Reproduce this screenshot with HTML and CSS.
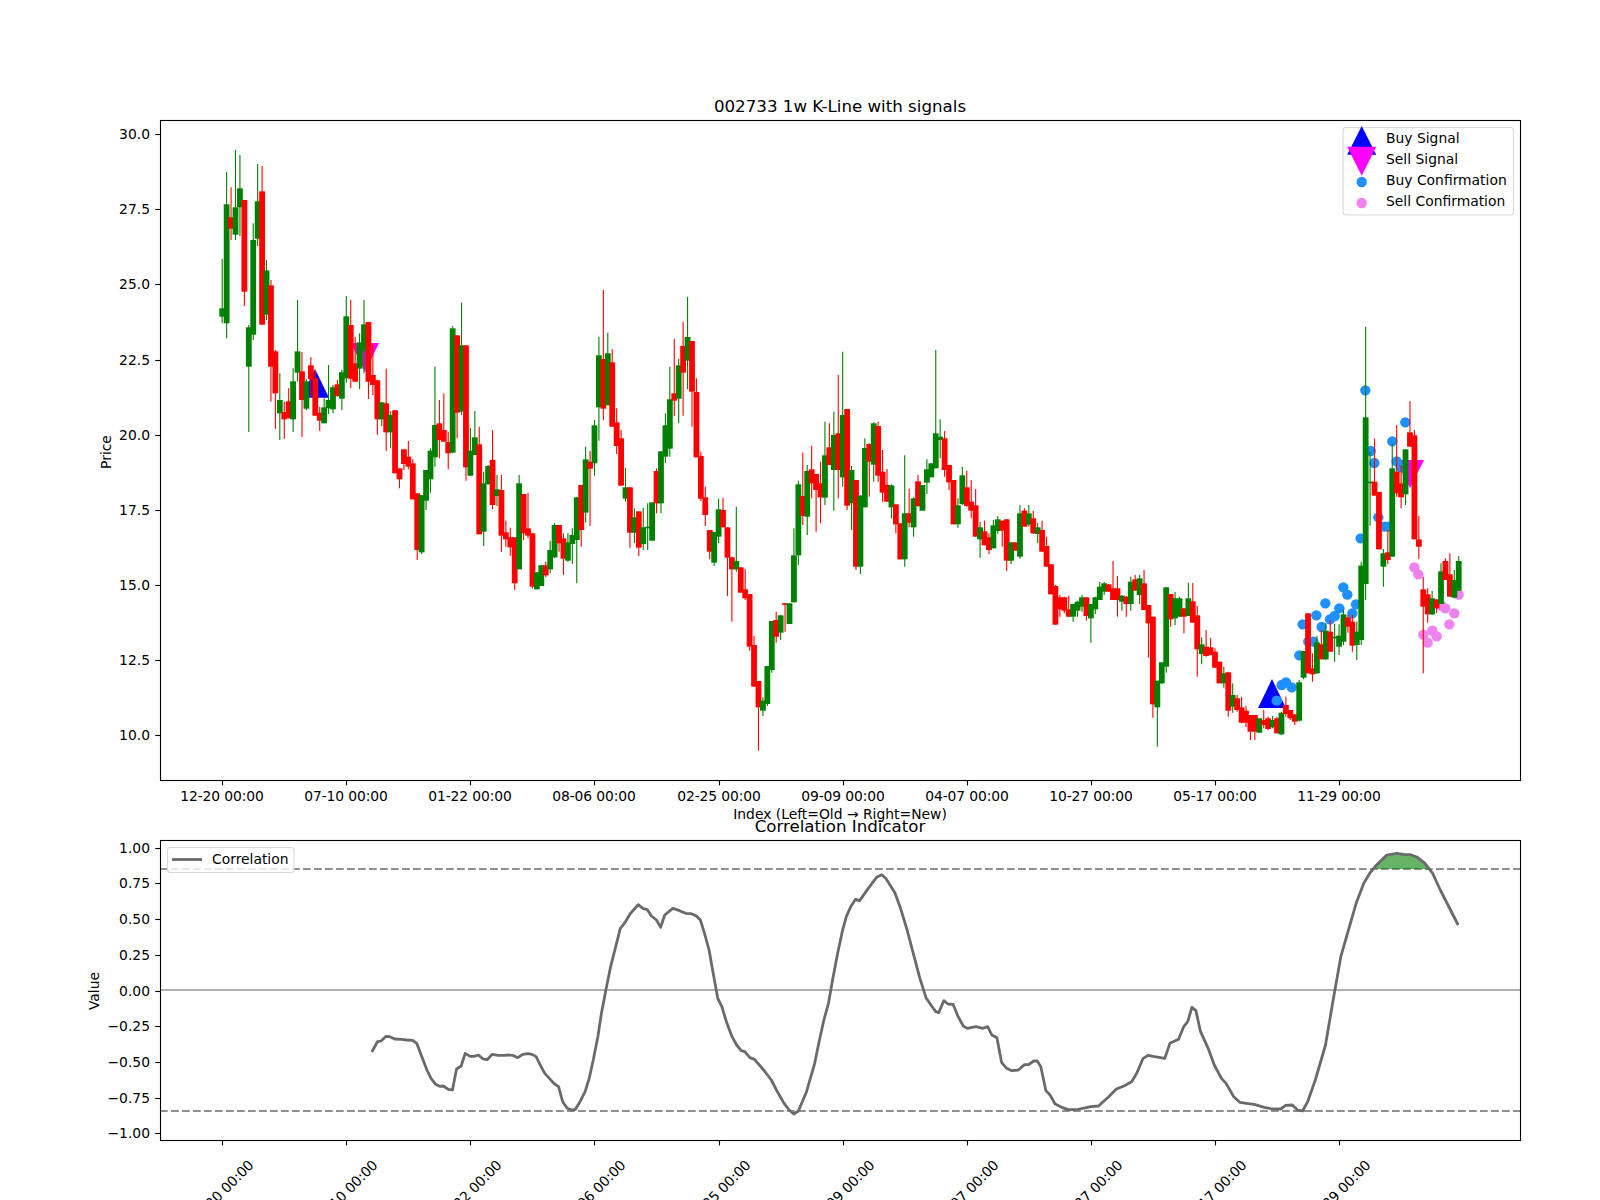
FILE: index.html
```html
<!DOCTYPE html>
<html lang="en">
<head>
  <meta charset="UTF-8" />
  <title>002733 1w K-Line with signals</title>
  <link rel="stylesheet" href="styles.css">
</head>
<body>
  <svg id="figure" class="figure" xmlns="http://www.w3.org/2000/svg" width="1600" height="1200" viewBox="0 0 1600 1200">
    <!-- price panel -->
    <text class="title" x="840" y="112">002733 1w K-Line with signals</text>
    <g id="signals">
      <polygon class="buy-signal" points="315,369 301,397.7 329,397.7" />
      <polygon class="buy-signal" points="1272,679 1258,708 1286,708" />
      <polygon class="sell-signal" points="351,343 379,343 365,372" />
      <polygon class="sell-signal" points="1396,460 1424,460 1410,488" />
    </g>
    <g id="confirmations"></g>
    <g id="candles"></g>
    <rect class="spine" x="160.5" y="120.5" width="1360" height="660" />
    <g id="price-ticks"></g>
    <text class="label" x="840" y="819">Index (Left=Old → Right=New)</text>
    <text class="label" transform="rotate(-90 111 452)" x="111" y="452">Price</text>

    <g class="legend">
      <rect class="legend-box" x="1343" y="127.5" width="170.5" height="87.5" rx="3" />
      <polygon class="buy-signal" points="1361.7,126 1347.2,154.7 1376.2,154.7" />
      <polygon class="sell-signal" points="1347.2,146.7 1376.2,146.7 1361.7,175.7" />
      <circle class="buy-dot" cx="1361.7" cy="182" r="5.2" />
      <circle class="sell-dot" cx="1361.7" cy="203" r="5.2" />
      <text class="legend-text" x="1386" y="143">Buy Signal</text>
      <text class="legend-text" x="1386" y="164">Sell Signal</text>
      <text class="legend-text" x="1386" y="185">Buy Confirmation</text>
      <text class="legend-text" x="1386" y="206">Sell Confirmation</text>
    </g>

    <!-- correlation panel -->
    <text class="title" x="840" y="832">Correlation Indicator</text>
    <line class="zero-line" x1="160" y1="990" x2="1520" y2="990" />
    <line class="level-line" x1="160" y1="869" x2="1520" y2="869" />
    <line class="level-line" x1="160" y1="1111" x2="1520" y2="1111" />
    <path id="corr-fill" class="corr-fill" />
    <polyline id="corr-line" class="corr-line" />
    <rect class="spine" x="160.5" y="840.5" width="1360" height="300" />
    <g id="corr-ticks"></g>
    <text class="label" transform="rotate(-90 99 991)" x="99" y="991">Value</text>

    <g class="legend">
      <rect class="legend-box" x="167.5" y="847.5" width="126.5" height="25" rx="3" />
      <line class="corr-line" x1="172" y1="859.5" x2="202" y2="859.5" />
      <text class="legend-text" x="212" y="864">Correlation</text>
    </g>
  </svg>

  <script src="chart.js"></script>
</body>
</html>
```

FILE: styles.css
```css
html, body {
  margin: 0;
  padding: 0;
  background: #fff;
  overflow: hidden;
}

.figure {
  display: block;
  font-family: "DejaVu Sans", sans-serif;
  font-size: 13.89px;
  fill: #000;
}

.title {
  font-size: 16.67px;
  text-anchor: middle;
}

.label,
.tick-x,
.tick-x-rot {
  text-anchor: middle;
}

.tick-x,
.tick-x-rot {
  letter-spacing: -0.12px;
}

.tick-y {
  text-anchor: end;
}

.spine {
  fill: none;
  stroke: #000;
  stroke-width: 1.1;
}

.tick-mark {
  stroke: #000;
  stroke-width: 1.1;
}

/* candles */
.wick-r { stroke: #f00; stroke-width: 1.1; }
.wick-g { stroke: #008000; stroke-width: 1.1; }
.body-r { fill: #f00; }
.body-g { fill: #008000; }

/* signals */
.buy-signal { fill: #00f; }
.sell-signal { fill: #f0f; }
.buy-dot { fill: #1e90ff; }
.sell-dot { fill: #ee82ee; }

.legend-box {
  fill: #fff;
  fill-opacity: 0.8;
  stroke: #d9d9d9;
  stroke-width: 1.1;
}

/* correlation */
.zero-line {
  stroke: #b0b0b0;
  stroke-width: 2;
}

.level-line {
  stroke: #909090;
  stroke-width: 2;
  stroke-dasharray: 7.7 3.3;
}

.corr-line {
  fill: none;
  stroke: #6a6a6a;
  stroke-width: 2.78;
  stroke-linejoin: round;
}

.corr-fill {
  fill: #008000;
  fill-opacity: 0.6;
}
```

FILE: chart.js
```js
const SVG_NS = 'http://www.w3.org/2000/svg';

// bar i sits at this x, ticks every 28 bars
const barX = i => 222.2 + 4.432 * i;
const TICK_STEP = 28 * 4.432;

function add(parent, name, attrs, text) {
  const el = document.createElementNS(SVG_NS, name);
  for (const key in attrs) el.setAttribute(key, attrs[key]);
  if (text) el.textContent = text;
  parent.appendChild(el);
  return el;
}

// candles: colour, wick top, body top, body bottom, wick bottom
// values were read off 3x crops, so y = top + value / 3
const SECTIONS = [
  { start: 0, top: 110, rows: `
g 447 595 620 640|g 186 283 640 685|r 232 322 356 390|g 120 292 374 390|g 135 235 292 378
r 270 270 545 588|g 645 652 770 966|g 340 390 674 690|g 162 274 386 408|r 168 244 644 644
g 450 481 614 630|r 510 526 770 875|r 720 724 850 957|g 790 870 910 990|r 875 906 928 987
r 835 874 925 925|g 775 814 928 966|g 570 724 788 815|r 726 784 870 981|g 808 814 896 900
r 741 766 808 860|r 780 805 917 917|r 890 908 932 963|g 865 892 940 940|g 765 870 895 912
g 825 832 898 910|r 810 823 858 860|g 780 787 866 900|g 558 619 805 818|r 570 645 806 835
r 680 760 815 815|g 670 697 776 837|g 570 643 722 790|r 636 636 815 867|r 700 795 825 855
r 810 811 928 975|g 875 877 928 948|r 776 880 967 1023|g 904 915 967 1015|r 900 901 1090 1090
r 1075 1075 1108 1135|r 1018 1018 1062 1080|r 993 1040 1070 1078|r 1048 1060 1168 1168|r 1150 1150 1320 1350
g 1155 1155 1327 1332|g 1080 1080 1172 1200|g 1015 1022 1108 1148|g 770 945 1042 1070|r 870 940 990 1045
r 850 960 995 995|r 965 996 1030 1078|g 648 655 1028 1030|r 676 676 908 985|g 578 706 905 915
r 706 706 1072 1112|g 953 1022 1097 1098|g 903 982 1035 1035|r 950 1003 1273 1273|g 1085 1120 1265 1308
g 1065 1068 1122 1125|r 960 1050 1185 1198|g 1095 1138 1158 1188|r 1095 1140 1277 1325|r 1232 1267 1288 1310
r 1253 1282 1312 1337|r 1282 1282 1420 1440|g 1095 1120 1378 1378|r 1152 1152 1270 1290|r 1148 1255 1277 1285
r 1270 1270 1430 1435|g 1387 1387 1438 1438|g 1366 1366 1428 1428|r 1355 1366 1396 1402|g 1292 1320 1378 1390` },
  { start: 75, top: 270, rows: `
g 760 765 862 865|r 765 765 820 845|r 790 805 866 915|g 790 817 872 875|g 775 795 822 882
g 680 682 810 940|r 645 645 780 830|g 530 568 728 758|r 543 575 596 768|g 450 466 580 617
g 200 256 412 512|r 60 267 416 450|g 188 250 406 406|r 237 277 470 470|r 415 457 528 552
r 480 505 647 647|g 594 652 686 695|r 652 652 788 833|g 715 742 788 820|r 725 724 833 858
g 713 772 822 840|g 700 770 775 840|g 697 697 812 812|r 595 603 700 730|g 545 544 700 730
g 430 466 560 578|g 290 388 536 560|r 207 370 392 438|g 267 286 386 460|r 155 228 308 437
g 80 201 272 358|r 213 213 365 470|r 325 366 562 562|r 545 558 686 693|r 650 682 735 768
r 780 780 845 868|g 785 786 878 888|g 687 718 800 820|r 684 720 772 772|r 772 772 863 978
r 860 862 898 1055|g 710 873 898 905|r 892 892 968 968|r 897 958 985 990|r 972 972 1130 1142
r 1098 1125 1250 1250|r 1233 1233 1312 1442|g 1282 1292 1322 1338|g 1188 1188 1302 1308|g 1053 1053 1200 1208
r 1025 1050 1100 1118|g 1036 1036 1088 1110|r 1000 1000 1005 1085|g 1000 1000 1062 1062|g 775 856 997 997
g 632 643 856 885|r 548 678 738 765|g 585 603 740 795|r 527 598 640 685|r 612 612 660 785
r 575 640 682 760|g 455 556 683 705|r 460 532 585 585|g 425 495 600 722|r 315 490 600 685
g 245 435 622 650|r 417 417 707 720|g 587 600 700 780|r 630 630 890 900|g 675 677 890 912
g 505 534 712 712|r 520 522 575 680|g 457 460 584 635|r 455 468 617 635|r 540 605 668 695
r 597 645 695 695|g 643 646 712 745|r 703 703 763 790|r 760 760 868 868|g 556 730 868 890
r 656 730 758 772|g 682 685 772 800|r 615 634 708 710|g 645 645 722 722|g 568 598 638 672
g 580 580 622 622|g 240 490 595 595|g 448 500 510 565|r 483 505 600 620|r 585 585 637 660` },
  { start: 165, top: 400, rows: `
r 240 240 373 373|g 295 316 373 383|g 200 226 312 315|r 212 262 318 320|r 240 305 332 355
r 267 316 410 410|g 365 382 418 473|r 362 394 436 436|r 400 412 450 462|g 360 376 445 445
g 348 358 393 402|r 362 362 392 440|r 358 358 482 513|g 427 427 482 492|r 427 427 452 452
g 315 340 470 476|r 325 332 380 380|g 315 340 374 380|r 333 355 400 402|g 368 382 402 430
r 362 390 455 455|r 410 438 500 500|r 493 493 583 583|r 555 558 674 674|r 585 592 628 650
r 590 592 632 640|r 587 628 650 650|g 612 612 650 665|g 602 605 632 650|g 585 592 620 635
r 592 592 648 662|g 612 612 655 728|g 590 592 628 642|g 546 560 600 600|g 546 550 575 585
r 553 553 575 575|r 483 565 600 600|r 528 565 600 650|g 585 587 605 632|r 588 590 612 650
g 530 545 612 632|r 525 538 572 572|g 524 535 585 612|r 510 550 630 630|r 615 615 670 773
r 650 650 913 953|g 842 842 922 1040|g 787 787 850 852|g 562 562 800 818|r 582 582 658 680
g 576 595 655 675|g 590 595 650 650|r 625 625 650 700|g 548 595 648 648|r 549 604 668 668
r 618 646 748 830|g 712 733 762 792|r 690 740 768 770|r 714 742 765 765|r 745 755 803 803
r 785 785 850 850|g 800 820 850 863|r 815 817 932 950|g 850 885 920 938|r 885 895 930 935
r 890 922 968 970|r 917 932 968 982|r 945 945 995 1020|r 945 945 995 1020|g 955 955 998 998
r 930 960 975 985|r 950 955 987 990|g 948 960 982 985|r 950 955 1000 1000|g 935 938 1003 1005
r 890 915 942 950` },
  { start: 241, top: 380, rows: `
r 990 990 1015 1020|r 1003 1003 1025 1035|g 900 907 1022 1025|g 813 813 893 898|r 700 700 880 880
r 820 865 883 905|g 767 787 880 882|r 750 793 838 838|g 730 752 838 840|r 720 755 815 815
g 732 770 775 845|g 733 767 800 825|g 688 703 785 795|r 705 712 740 758|r 705 725 797 815
g 725 755 795 840|g 545 557 780 795|g -159 112 612 660|g 215 305 310 437|r 175 305 347 347
r 336 336 508 508|g 507 520 560 620|r 450 517 540 552|g 190 265 530 530|r 135 275 340 350
r 255 310 352 385|g 208 208 343 375|r 63 157 200 200|r 150 166 478 478|r 408 478 500 537
r 590 628 680 880|r 625 643 703 728|g 633 655 703 705|r 658 658 685 700|g 550 574 672 672
r 535 543 600 600|r 520 583 650 650|g 570 600 653 655|g 528 543 632 632` }
];

const candles = document.getElementById('candles');
const BODY_W = 5.8;

SECTIONS.forEach(section => {
  const rows = section.rows.trim().split(/[|\n]/);
  rows.forEach((row, n) => {
    const [c, wt, bt, bb, wb] = row.split(' ');
    const x = barX(section.start + n);
    const y = v => section.top + v / 3;
    add(candles, 'line', { class: 'wick-' + c, x1: x, x2: x, y1: y(+wt), y2: y(+wb) });
    add(candles, 'rect', {
      class: 'body-' + c,
      x: x - BODY_W / 2,
      y: y(+bt),
      width: BODY_W,
      height: (bb - bt) / 3
    });
  });
});

// confirmation dots, also read off a 3x crop at (1230, 380)
const BUY_DOTS = [[406,31],[422,213],[433,249],[487,184],[526,127],[500,244],[512,262],[445,412],[463,440],[476,440],
  [392,475],[340,622],[352,644],[286,670],[378,673],[328,685],[367,700],[314,708],[300,718],[259,706],[218,733],
  [275,741],[235,785],[250,785],[208,826],[155,915],[168,907],[185,922],[140,962]];
const SELL_DOTS = [[553,562],[565,583],[580,764],[593,788],[607,752],[620,769],[646,685],[634,677],[673,700],[658,733],[686,644]];

const dots = document.getElementById('confirmations');
function addDots(list, cls) {
  list.forEach(([zx, zy]) => {
    add(dots, 'circle', { class: cls, cx: 1230 + zx / 3, cy: 380 + zy / 3, r: 5.2 });
  });
}
addDots(BUY_DOTS, 'buy-dot');
addDots(SELL_DOTS, 'sell-dot');

// correlation line
const CORR_LEFT = [[572,846],[583,815],[590,813],[600,799],[607,800],[617,807],[630,808],[640,810],[652,811],[660,820],
  [670,860],[680,900],[688,925],[697,943],[705,949],[712,948],[722,958],[730,960],[738,897],[747,888],[755,850],[765,859],
  [772,859],[781,855],[790,867],[798,869],[808,853],[820,856],[830,856],[842,855],[850,857],[858,863],[868,853],[878,851],
  [886,853],[894,860],[902,885],[911,910],[920,925],[930,942],[938,950],[946,995],[955,1015],[963,1020],[971,1018],[980,995],
  [990,965],[998,925],[1006,870],[1015,800],[1022,730],[1032,650],[1040,590],[1050,530],[1059,475],[1068,458],[1078,432],
  [1094,404],[1104,416],[1112,419],[1120,438],[1130,450],[1138,472],[1146,435],[1162,415],[1175,422],[1187,430],[1198,431],
  [1208,438],[1216,450],[1224,490],[1233,540],[1241,610],[1250,685],[1258,710],[1268,760],[1278,800],[1287,825],[1296,842],
  [1303,845],[1313,863],[1322,868],[1340,900],[1355,930],[1365,960],[1380,1000],[1390,1020],[1399,1032],[1408,1023],[1424,965],
  [1440,880],[1448,820],[1458,750],[1467,700],[1475,630],[1485,550],[1494,485],[1502,440],[1510,412],[1520,388],[1528,392],
  [1545,355],[1555,335]];
const CORR_RIGHT = [[150,322],[160,314],[168,325],[186,368],[196,410],[210,480],[222,550],[235,625],[247,683],[258,708],
  [266,725],[272,728],[282,692],[290,702],[300,703],[310,740],[320,768],[328,775],[345,770],[358,775],[368,770],[376,795],
  [386,803],[395,877],[405,895],[415,902],[428,900],[440,884],[448,884],[458,873],[465,873],[472,890],[482,962],[490,975],
  [500,1002],[515,1013],[525,1019],[545,1018],[570,1010],[585,1008],[605,980],[620,957],[635,948],[650,935],[660,910],[672,866],
  [682,856],[695,860],[715,865],[725,820],[742,808],[752,770],[760,755],[768,712],[776,722],[785,785],[800,835],[812,885],
  [826,925],[835,940],[850,980],[862,997],[875,1000],[890,1003],[910,1012],[925,1017],[942,1017],[952,1006],[965,1005],[975,1020],
  [985,1023],[995,995],[1010,930],[1030,825],[1045,690],[1060,560],[1075,480],[1090,400],[1105,340],[1118,307],[1130,285],
  [1150,255],[1170,250],[1185,254],[1197,254],[1210,262],[1225,280],[1240,310],[1255,360],[1275,420],[1290,465]];

const corrPoints = [
  ...CORR_LEFT.map(([zx, zy]) => [80 + zx / 1.96, 770 + zy / 3]),
  ...CORR_RIGHT.map(([zx, zy]) => [800 + zx / 1.96, 770 + zy / 3])
];
document.getElementById('corr-line').setAttribute('points', corrPoints.map(p => p.join(',')).join(' '));

// green area where the line is above the 0.85 level
const above = corrPoints.filter(p => p[1] < 869 && p[0] > 1300);
document.getElementById('corr-fill').setAttribute('d',
  'M' + (800 + 1127 / 1.96) + ' 869 L' + above.map(p => p.join(' ')).join(' L') + ' L' + (800 + 1235 / 1.96) + ' 869 Z');

// ticks
const DATES = ['12-20', '07-10', '01-22', '08-06', '02-25', '09-09', '04-07', '10-27', '05-17', '11-29'];
const priceTicks = document.getElementById('price-ticks');
const corrTicks = document.getElementById('corr-ticks');

DATES.forEach((date, n) => {
  const x = Math.round(barX(0) + TICK_STEP * n) + 0.5;
  const text = date + ' 00:00';
  add(priceTicks, 'line', { class: 'tick-mark', x1: x, x2: x, y1: 781, y2: 785.4 });
  add(priceTicks, 'text', { class: 'tick-x', x: x - 0.5, y: 801 }, text);
  add(corrTicks, 'line', { class: 'tick-mark', x1: x, x2: x, y1: 1141, y2: 1145.4 });
  add(corrTicks, 'text', { class: 'tick-x-rot', x: x - 1, y: 1197, transform: 'rotate(-45 ' + (x - 1) + ' 1192)' }, text);
});

['30.0', '27.5', '25.0', '22.5', '20.0', '17.5', '15.0', '12.5', '10.0'].forEach(label => {
  const y = Math.round(735.4 - (label - 10) * 30.07) + 0.5;
  add(priceTicks, 'line', { class: 'tick-mark', x1: 155.2, x2: 160, y1: y, y2: y });
  add(priceTicks, 'text', { class: 'tick-y', x: 150, y: y + 4 }, label);
});

['1.00', '0.75', '0.50', '0.25', '0.00', '−0.25', '−0.50', '−0.75', '−1.00'].forEach(label => {
  const y = Math.round(990.5 - parseFloat(label.replace('−', '-')) * 142.85) + 0.5;
  add(corrTicks, 'line', { class: 'tick-mark', x1: 155.2, x2: 160, y1: y, y2: y });
  add(corrTicks, 'text', { class: 'tick-y', x: 150, y: y + 4 }, label);
});
```
